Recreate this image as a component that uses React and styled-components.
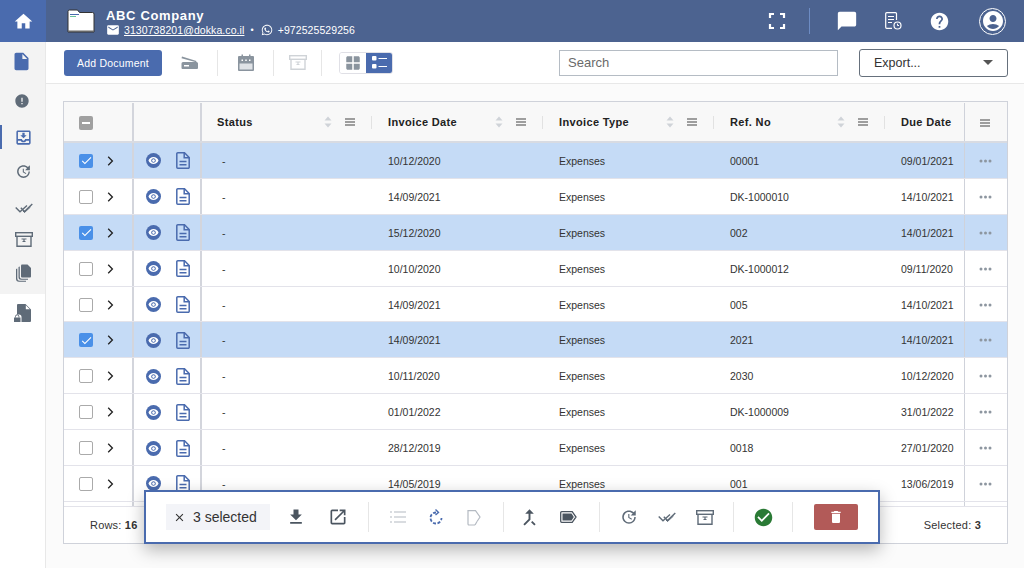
import React from "react";
import styled, { createGlobalStyle } from "styled-components";
import {
  MdHome,
  MdInsertDriveFile,
  MdError,
  MdOutlineMoveToInbox,
  MdUpdate,
  MdEmail,
  MdChatBubble,
  MdHelp,
  MdAccountCircle,
  MdCheck,
  MdRemoveRedEye,
  MdClose,
  MdFileDownload,
  MdOpenInNew,
  MdCheckCircle,
  MdDelete,
  MdCallMerge,
  MdWindow,
} from "react-icons/md";
import { FaWhatsapp } from "react-icons/fa";

const rows = [
  { date: "10/12/2020", ref: "00001", due: "09/01/2021", selected: true },
  { date: "14/09/2021", ref: "DK-1000010", due: "14/10/2021" },
  { date: "15/12/2020", ref: "002", due: "14/01/2021", selected: true },
  { date: "10/10/2020", ref: "DK-1000012", due: "09/11/2020" },
  { date: "14/09/2021", ref: "005", due: "14/10/2021" },
  { date: "14/09/2021", ref: "2021", due: "14/10/2021", selected: true },
  { date: "10/11/2020", ref: "2030", due: "10/12/2020" },
  { date: "01/01/2022", ref: "DK-1000009", due: "31/01/2022" },
  { date: "28/12/2019", ref: "0018", due: "27/01/2020" },
  { date: "14/05/2019", ref: "001", due: "13/06/2019" },
];

const columns = ["Status", "Invoice Date", "Invoice Type", "Ref. No"];

const DoubleCheck = ({ color = "#5f6b78" }) => (
  <svg width="18" height="12" viewBox="0 0 18 12" fill="none" stroke={color} strokeWidth="1.400">
    <path d="M.7 5.500l4.300 4.300 7-6.300" />
    <path d="M5.800 5.800l3.700 3.700 7.800-7.500" />
    <path d="M8 9l1.500 1.500 6-5.500" strokeWidth="1" />
  </svg>
);

const ArchiveBox = ({ color = "#5f6b78" }) => (
  <svg width="18" height="15" viewBox="0 0 18 15" fill="none" stroke={color} strokeWidth="1.400">
    <rect x=".7" y=".7" width="16.600" height="3.600" />
    <path d="M2 4.300v10h14v-10" />
    <path d="M6.500 7h5M9 7v2.500M7.500 9.500h3" strokeWidth="1.200" />
  </svg>
);

const DocLines = () => (
  <svg width="14" height="17" viewBox="0 0 14 17" fill="none" stroke="#4a6bae" strokeWidth="1.500">
    <path d="M1.800.8h6.700l4.700 4.700v9.700a1 1 0 0 1-1 1H1.800a1 1 0 0 1-1-1V1.800a1 1 0 0 1 1-1z" />
    <path d="M8.200.8v5h5" />
    <path d="M3.500 9.500h7M3.500 12.700h7" />
  </svg>
);

const CopyDocs = () => (
  <svg width="15" height="18" viewBox="0 0 15 18" fill="#5f6b78">
    <path d="M6 .5h5.500L15 4v8.500a1 1 0 0 1-1 1H6a1 1 0 0 1-1-1v-11a1 1 0 0 1 1-1z" />
    <path d="M3.800 2.500v10.500a1.800 1.800 0 0 0 1.800 1.800H12v1H5a2.500 2.500 0 0 1-2.500-2.500V3z" />
    <path d="M1.300 4.500v10a2.300 2.300 0 0 0 2.300 2.300H10v1H3a3 3 0 0 1-3-3V5z" />
  </svg>
);

const LockedDoc = () => (
  <svg width="17" height="18" viewBox="0 0 17 18" fill="#5f6b78">
    <path d="M4 0h7.500L17 5.500V17a1 1 0 0 1-1 1H7.500v-5a2.500 2.500 0 0 0-2.500-2.500H3V1a1 1 0 0 1 1-1z" />
    <path d="M11.800 1.200v4h4z" fill="#fff" />
    <path d="M0 13.500h6.500V18H0z" />
    <path d="M1.500 13.500v-1a1.700 1.700 0 0 1 3.400 0v1" fill="none" stroke="#5f6b78" strokeWidth="1" />
  </svg>
);

const FolderLogo = () => (
  <svg width="28" height="26" viewBox="0 0 28 26">
    <path d="M1 3.500A1.500 1.500 0 0 1 2.500 2h8l2 2.500h13a1.500 1.500 0 0 1 1.500 1.500v18H1z" fill="#fff" stroke="#333" strokeWidth="1" />
    <path d="M1 22.500h26v1.500H1z" fill="#666" />
    <path d="M3 6.500h9" stroke="#4a6bae" strokeWidth="1" />
    <path d="M3 8.500h6" stroke="#6ac49a" strokeWidth="1" />
  </svg>
);

const Scanner = () => (
  <svg width="17" height="15" viewBox="0 0 17 15" fill="#8a949e">
    <path d="M.5 3.300l14.500 4 .5-1.200L1 1.500z" />
    <path d="M2 7h13.500A1.500 1.500 0 0 1 17 8.500V13a1 1 0 0 1-1 1H1.500a1 1 0 0 1-1-1V8.500A1.500 1.500 0 0 1 2 7z" />
    <path d="M3 10h5v1.500H3z" fill="#fff" />
  </svg>
);

const Calendar = () => (
  <svg width="16" height="17" viewBox="0 0 16 17">
    <path d="M1 2h2.500V.5h1.500V2h6V.5h1.500V2H15a1 1 0 0 1 1 1v13a1 1 0 0 1-1 1H1a1 1 0 0 1-1-1V3a1 1 0 0 1 1-1z" fill="#8a949e" />
    <path d="M1.500 9.500h13V15.500h-13z" fill="#dfe2e6" />
    <path d="M3.500 5.500H5V7H3.500zM7.250 5.500h1.500V7h-1.500zM11 5.500h1.500V7H11z" fill="#fff" />
  </svg>
);

const ReportClock = () => (
  <svg width="17" height="18" viewBox="0 0 17 18" fill="none" stroke="#fff" strokeWidth="1.200">
    <path d="M11.500 8V1.700a1 1 0 0 0-1-1H1.700a1 1 0 0 0-1 1v13.600a1 1 0 0 0 1 1H7" />
    <path d="M3 4.500h6M3 7.500h6M3 10.500h4" />
    <circle cx="12.500" cy="13.500" r="3.500" />
    <path d="M12.500 11.700v1.800H14" strokeWidth="1" />
  </svg>
);

const Corners = () => (
  <svg width="18" height="18" viewBox="0 0 18 18" fill="none" stroke="#fff" strokeWidth="2.200">
    <path d="M2 6V2h4M12 2h4v4M16 12v4h-4M6 16H2v-4" />
  </svg>
);

const SortArrows = () => (
  <svg width="8" height="12" viewBox="0 0 8 12" fill="#cfd3d8">
    <path d="M4 .5l3.500 4H.5zM4 11.500L.5 7.500h7z" />
  </svg>
);

const MenuLines = () => (
  <svg width="10" height="8" viewBox="0 0 10 8" stroke="#444" strokeWidth="1">
    <path d="M0 1h10M0 4h10M0 7h10" />
  </svg>
);

const Chevron = () => (
  <svg width="7" height="10" viewBox="0 0 7 10" fill="none" stroke="#222" strokeWidth="1.300">
    <path d="M1.200 .8L5.400 5 1.200 9.200" />
  </svg>
);

const Dots = () => (
  <svg width="13" height="4" viewBox="0 0 13 4" fill="#8d96a0">
    <circle cx="2" cy="2" r="1.500" />
    <circle cx="6.500" cy="2" r="1.500" />
    <circle cx="11" cy="2" r="1.500" />
  </svg>
);

const ListLines = () => (
  <svg width="16" height="12" viewBox="0 0 16 12" stroke="#b4bac2" strokeWidth="1.200">
    <path d="M0 1h2M4 1h12M0 6h2M4 6h12M0 11h2M4 11h12" />
  </svg>
);

const DashedRotate = () => (
  <svg width="14" height="16" viewBox="0 0 14 16" fill="none" stroke="#4a6bae" strokeWidth="1.800">
    <path d="M7 3.500a5.500 5.500 0 1 0 5.500 5.500" strokeDasharray="3 1.600" />
    <path d="M6.500 .5l3 3-3 2.500" strokeWidth="1.400" />
  </svg>
);

const DocTag = () => (
  <svg width="14" height="17" viewBox="0 0 14 17" fill="none" stroke="#b4bac2" strokeWidth="1.200">
    <path d="M8 16H2a1 1 0 0 1-1-1V1.600h7.500L13 8l-3 4.500" />
    <path d="M8 16l2-3.500" />
  </svg>
);

const TagIcon = () => (
  <svg width="17" height="12" viewBox="0 0 17 12">
    <path d="M1.700.7h10.500L16 6l-3.800 5.300H1.700a1 1 0 0 1-1-1V1.700a1 1 0 0 1 1-1z" fill="none" stroke="#4b5560" strokeWidth="1.300" />
    <path d="M2.500 2.500h9L13.800 6l-2.300 3.500h-9z" fill="#4b5560" />
  </svg>
);

const ListView = () => (
  <svg width="15" height="15" viewBox="0 0 15 15" fill="#fff">
    <rect x="0" y="1" width="4.500" height="4.500" rx="1" />
    <rect x="0" y="9" width="4.500" height="4.500" rx="1" />
    <path d="M6.500 3h8.500v1H6.500zM6.500 11h8.500v1H6.500z" />
  </svg>
);

function App() {
  return (
    <Page>
      <GlobalStyle />
      <Sidebar>
        <HomeButton>
          <MdHome size={21} color="#fff" />
        </HomeButton>
        <SideNav>
          <SideItem $h={37} $shift={4}>
            <MdInsertDriveFile size={21} color="#4a6bae" />
          </SideItem>
          <SideItem $h={41} $shift={4}>
            <MdError size={16} color="#5f6b78" />
          </SideItem>
          <SideItem $h={33} $active>
            <MdOutlineMoveToInbox size={19} color="#4a6bae" />
          </SideItem>
          <SideItem $h={35}>
            <MdUpdate size={17} color="#5f6b78" />
          </SideItem>
          <SideItem $h={37}>
            <DoubleCheck />
          </SideItem>
          <SideItem $h={27}>
            <ArchiveBox />
          </SideItem>
          <SideItem $h={39}>
            <CopyDocs />
          </SideItem>
        </SideNav>
        <SideBottom>
          <LockedDoc />
        </SideBottom>
      </Sidebar>

      <Main>
        <Header>
          <FolderLogo />
          <Company>
            <CompanyName>ABC Company</CompanyName>
            <Contacts>
              <MdEmail size={14} color="#fff" />
              <ContactLink>3130738201@dokka.co.il</ContactLink>
              <Dot>•</Dot>
              <FaWhatsapp size={12} color="#fff" />
              <span>+972525529256</span>
            </Contacts>
          </Company>
          <HeaderIcons>
            <Corners />
            <HeaderDivider />
            <HeaderIcon $w={22}>
              <MdChatBubble size={22} color="#fff" />
            </HeaderIcon>
            <HeaderIcon $w={20}>
              <ReportClock />
            </HeaderIcon>
            <HeaderIcon $w={22} $mr={29}>
              <MdHelp size={21} color="#fff" />
            </HeaderIcon>
            <Avatar>
              <MdAccountCircle size={24} color="#fff" />
            </Avatar>
          </HeaderIcons>
        </Header>

        <Toolbar>
          <AddButton>Add Document</AddButton>
          <ToolIcon $w={55}>
            <Scanner />
          </ToolIcon>
          <ToolDivider />
          <ToolIcon $w={55}>
            <Calendar />
          </ToolIcon>
          <ToolDivider />
          <ToolIcon $w={47} $dim>
            <ArchiveBox color="#8a949e" />
          </ToolIcon>
          <ToolDivider />
          <ViewToggle>
            <ToggleItem>
              <MdWindow size={18} color="#8a949e" />
            </ToggleItem>
            <ToggleItem $on>
              <ListView />
            </ToggleItem>
          </ViewToggle>
          <SearchBox placeholder="Search" />
          <ExportSelect>
            Export...
            <Caret />
          </ExportSelect>
        </Toolbar>

        <Content>
          <Table>
            <HeaderRow>
              <CheckCell>
                <MixedBox />
              </CheckCell>
              <ActionCell />
              {columns.map((c, i) => (
                <HeadCell key={c} $pad={i === 0 ? 15 : 16}>
                  <span>{c}</span>
                  <HeadTools>
                    <SortArrows />
                    <MenuLines />
                  </HeadTools>
                </HeadCell>
              ))}
              <HeadCell $pad={16}>Due Date</HeadCell>
              <FixedCell>
                <MenuLines />
              </FixedCell>
            </HeaderRow>
            <RowsArea>
              {rows.map((r, i) => (
                <Row key={i} $selected={r.selected}>
                  <CheckCell>
                    <Box $checked={r.selected}>{r.selected && <MdCheck size={13} color="#fff" />}</Box>
                    <Chevron />
                  </CheckCell>
                  <ActionCell>
                    <EyeBadge>
                      <MdRemoveRedEye size={11} color="#fff" />
                    </EyeBadge>
                    <DocLines />
                  </ActionCell>
                  <BodyCell $pad={20}>-</BodyCell>
                  <BodyCell>{r.date}</BodyCell>
                  <BodyCell>Expenses</BodyCell>
                  <BodyCell>{r.ref}</BodyCell>
                  <BodyCell>{r.due}</BodyCell>
                  <FixedCell>
                    <Dots />
                  </FixedCell>
                </Row>
              ))}
              <FillerRow>
                <CheckCell />
                <ActionCell />
                <div />
                <div />
                <div />
                <div />
                <div />
                <FixedCell />
              </FillerRow>
            </RowsArea>
            <Footer>
              <span>
                Rows: <b>16</b>
              </span>
              <span>
                Selected: <b>3</b>
              </span>
            </Footer>
          </Table>
        </Content>

        <ActionBar>
          <SelectedPill>
            <MdClose size={13} color="#333" />
            3 selected
          </SelectedPill>
          <BarSlot $w={42}>
            <MdFileDownload size={20} color="#4b5560" />
          </BarSlot>
          <BarSlot $w={42}>
            <MdOpenInNew size={20} color="#4b5560" />
          </BarSlot>
          <BarDivider $l={9} $r={10} />
          <BarSlot $w={38}>
            <ListLines />
          </BarSlot>
          <BarSlot $w={38}>
            <DashedRotate />
          </BarSlot>
          <BarSlot $w={38}>
            <DocTag />
          </BarSlot>
          <BarDivider $l={10} $r={6} />
          <BarSlot $w={39}>
            <MdCallMerge size={23} color="#4b5560" />
          </BarSlot>
          <BarSlot $w={39}>
            <TagIcon />
          </BarSlot>
          <BarDivider $l={11} $r={10} />
          <BarSlot $w={38}>
            <MdUpdate size={18} color="#5f6b78" />
          </BarSlot>
          <BarSlot $w={38}>
            <DoubleCheck />
          </BarSlot>
          <BarSlot $w={38}>
            <ArchiveBox />
          </BarSlot>
          <BarDivider $l={9} $r={10} />
          <BarSlot $w={38}>
            <MdCheckCircle size={21} color="#2a7a35" />
          </BarSlot>
          <BarDivider $l={10} $r={21} />
          <DeleteButton>
            <MdDelete size={16} color="#fff" />
          </DeleteButton>
        </ActionBar>
      </Main>
    </Page>
  );
}

const GlobalStyle = createGlobalStyle`
  html, body {
    margin: 0;
    padding: 0;
    overflow: hidden;
  }
  * {
    box-sizing: border-box;
  }
  body {
    font-family: "Liberation Sans", Arial, sans-serif;
  }
`;

const Page = styled.div`
  position: relative;
  display: flex;
  width: 1024px;
  height: 568px;
  overflow: hidden;
  background: #fbfbfb;
`;

const Sidebar = styled.div`
  display: flex;
  flex-direction: column;
  flex-shrink: 0;
  width: 46px;
  height: 100%;
  background: #fff;
  border-right: 1px solid #e8e8e8;
`;

const HomeButton = styled.div`
  display: flex;
  justify-content: center;
  align-items: center;
  width: 46px;
  height: 42px;
  background: #4a6bae;
`;

const SideNav = styled.div`
  display: flex;
  flex-direction: column;
  height: 252px;
  padding-top: 1px;
  background: #f3f3f3;
`;

const SideItem = styled.div`
  position: relative;
  display: flex;
  justify-content: center;
  align-items: center;
  height: ${(p) => p.$h}px;
  padding-left: 2px;
  padding-right: ${(p) => p.$shift || 0}px;
  &::before {
    content: "";
    display: ${(p) => (p.$active ? "block" : "none")};
    position: absolute;
    left: 0;
    top: 4px;
    width: 2px;
    height: 24px;
    background: #4a6bae;
  }
`;

const SideBottom = styled.div`
  display: flex;
  justify-content: center;
  padding-top: 10px;
  padding-right: 1px;
`;

const Main = styled.div`
  display: flex;
  flex-direction: column;
  flex: 1;
  min-width: 0;
`;

const Header = styled.div`
  display: flex;
  align-items: center;
  flex-shrink: 0;
  height: 42px;
  padding: 0 18px 0 21px;
  background: #4c6390;
  color: #fff;
`;

const Company = styled.div`
  display: flex;
  flex-direction: column;
  margin-left: 11px;
  padding-top: 3px;
`;

const CompanyName = styled.div`
  font-size: 13px;
  font-weight: 700;
  letter-spacing: 0.65px;
`;

const Contacts = styled.div`
  display: flex;
  align-items: center;
  gap: 5px;
  font-size: 10.5px;
  letter-spacing: 0.08px;
`;

const ContactLink = styled.span`
  margin-left: -1px;
  text-decoration: underline;
`;

const Dot = styled.span`
  margin: 0 2px 0 1px;
  font-size: 9px;
`;

const HeaderIcons = styled.div`
  display: flex;
  align-items: center;
  margin-left: auto;
`;

const HeaderDivider = styled.div`
  width: 1px;
  height: 26px;
  margin: 0 26px 0 23px;
  background: #6d8cc4;
`;

const HeaderIcon = styled.div`
  display: flex;
  justify-content: center;
  width: ${(p) => p.$w}px;
  margin-right: ${(p) => p.$mr || 25}px;
`;

const Avatar = styled.div`
  display: flex;
  justify-content: center;
  align-items: center;
  width: 27px;
  height: 27px;
  border: 1px solid #fff;
  border-radius: 50%;
`;

const Toolbar = styled.div`
  display: flex;
  align-items: center;
  flex-shrink: 0;
  height: 42px;
  padding: 0 16px 0 18px;
  background: #fff;
  border-bottom: 1px solid #e8e8e8;
`;

const AddButton = styled.button`
  width: 98px;
  height: 26px;
  padding: 0;
  border: none;
  border-radius: 3px;
  background: #4a6bae;
  color: #fff;
  font-family: inherit;
  font-size: 10.5px;
  letter-spacing: 0.2px;
`;

const ToolIcon = styled.div`
  display: flex;
  justify-content: center;
  width: ${(p) => p.$w}px;
  opacity: ${(p) => (p.$dim ? 0.4 : 1)};
`;

const ToolDivider = styled.div`
  width: 1px;
  height: 26px;
  background: #e6e6e6;
`;

const ViewToggle = styled.div`
  display: flex;
  height: 22px;
  margin-left: 17px;
  border: 1px solid #e0e0e6;
  border-radius: 3px;
  overflow: hidden;
`;

const ToggleItem = styled.div`
  display: flex;
  justify-content: center;
  align-items: center;
  width: 26px;
  background: ${(p) => (p.$on ? "#4a6bae" : "#fff")};
`;

const SearchBox = styled.input`
  width: 279px;
  height: 26px;
  margin-left: auto;
  padding: 0 8px;
  border: 1px solid #b5bcc4;
  outline: none;
  font-family: inherit;
  font-size: 13px;
  &::placeholder {
    color: #6a6a6a;
  }
`;

const ExportSelect = styled.div`
  display: flex;
  justify-content: space-between;
  align-items: center;
  width: 149px;
  height: 28px;
  margin-left: 21px;
  padding: 0 14px;
  border: 1px solid #66707c;
  border-radius: 3px;
  color: #333;
  font-size: 12.5px;
`;

const Caret = styled.div`
  width: 0;
  height: 0;
  border-left: 5px solid transparent;
  border-right: 5px solid transparent;
  border-top: 5px solid #555;
`;

const Content = styled.div`
  flex: 1;
  min-height: 0;
  padding: 17px 16px 24px 17px;
`;

const Table = styled.div`
  display: flex;
  flex-direction: column;
  width: 945px;
  height: 443px;
  background: #fff;
  border: 1px solid #cfd2da;
`;

const gridColumns = "70px 68px 170px 171px 171px 171px 79px 43px";

const HeaderRow = styled.div`
  display: grid;
  grid-template-columns: ${gridColumns};
  flex-shrink: 0;
  height: 41px;
  padding-top: 1px;
  background: #f8f8f8;
  border-bottom: 2px solid #d8dbe2;
`;

const RowsArea = styled.div`
  flex: 1;
  min-height: 0;
  overflow: hidden;
`;

const Row = styled.div`
  display: grid;
  grid-template-columns: ${gridColumns};
  height: 35.9px;
  background: ${(p) => (p.$selected ? "#c5dbf6" : "#fff")};
  border-bottom: 1px solid #e3e3ea;
`;

const FillerRow = styled.div`
  display: grid;
  grid-template-columns: ${gridColumns};
  height: 5px;
`;

const CheckCell = styled.div`
  display: flex;
  align-items: center;
  gap: 14px;
  padding-left: 15px;
  padding-top: 1px;
  border-right: 2px solid #d3d5dc;
`;

const ActionCell = styled.div`
  display: flex;
  align-items: center;
  gap: 15px;
  padding-left: 12px;
  padding-top: 1px;
  border-right: 2px solid #d3d5dc;
`;

const EyeBadge = styled.div`
  display: flex;
  justify-content: center;
  align-items: center;
  width: 15px;
  height: 15px;
  background: #4a6bae;
  border-radius: 50%;
`;

const Box = styled.div`
  display: flex;
  justify-content: center;
  align-items: center;
  flex-shrink: 0;
  width: 14px;
  height: 14px;
  background: ${(p) => (p.$checked ? "#4a90e8" : "#fff")};
  border: ${(p) => (p.$checked ? "none" : "1.5px solid #aaa")};
  border-radius: 2px;
`;

const MixedBox = styled.div`
  display: flex;
  justify-content: center;
  align-items: center;
  width: 14px;
  height: 14px;
  background: #a0a0a0;
  border-radius: 2px;
  &::after {
    content: "";
    width: 8px;
    height: 2px;
    background: #fff;
  }
`;

const HeadCell = styled.div`
  display: flex;
  align-items: center;
  justify-content: space-between;
  padding-left: ${(p) => p.$pad}px;
  color: #222;
  font-size: 11px;
  font-weight: 700;
  letter-spacing: 0.35px;
`;

const HeadTools = styled.div`
  display: flex;
  align-items: center;
  gap: 13px;
  height: 13px;
  padding-right: 16px;
  border-right: 1px solid #e2e2e2;
`;

const BodyCell = styled.div`
  display: flex;
  align-items: center;
  padding-left: ${(p) => p.$pad || 16}px;
  padding-top: 1px;
  overflow: hidden;
  color: #333;
  font-size: 10.5px;
  white-space: nowrap;
`;

const FixedCell = styled.div`
  display: flex;
  justify-content: center;
  align-items: center;
  padding-right: 2px;
  padding-top: 1px;
  border-left: 1px solid #cfd2da;
`;

const Footer = styled.div`
  display: flex;
  justify-content: space-between;
  align-items: center;
  flex-shrink: 0;
  height: 37px;
  padding: 0 26px;
  background: #fff;
  border-top: 1px solid #e3e3ea;
  color: #333;
  font-size: 11px;
  letter-spacing: 0.2px;
`;

const ActionBar = styled.div`
  position: absolute;
  left: 144px;
  top: 490px;
  display: flex;
  align-items: center;
  width: 736px;
  height: 54px;
  padding-left: 20px;
  background: #fff;
  border: 2px solid #4a6bae;
  box-shadow: 0 6px 16px rgba(0, 0, 0, 0.28);
`;

const SelectedPill = styled.div`
  display: flex;
  align-items: center;
  gap: 7px;
  width: 104px;
  height: 26px;
  margin-right: 5px;
  padding-left: 7px;
  background: #f3f4f8;
  color: #333;
  font-size: 14px;
`;

const BarSlot = styled.div`
  display: flex;
  justify-content: center;
  align-items: center;
  width: ${(p) => p.$w}px;
`;

const BarDivider = styled.div`
  width: 1px;
  height: 30px;
  margin: 0 ${(p) => p.$r}px 0 ${(p) => p.$l}px;
  background: #e6e6e6;
`;

const DeleteButton = styled.div`
  display: flex;
  justify-content: center;
  align-items: center;
  width: 44px;
  height: 26px;
  background: #b25a58;
  border-radius: 2px;
`;

export default App;
